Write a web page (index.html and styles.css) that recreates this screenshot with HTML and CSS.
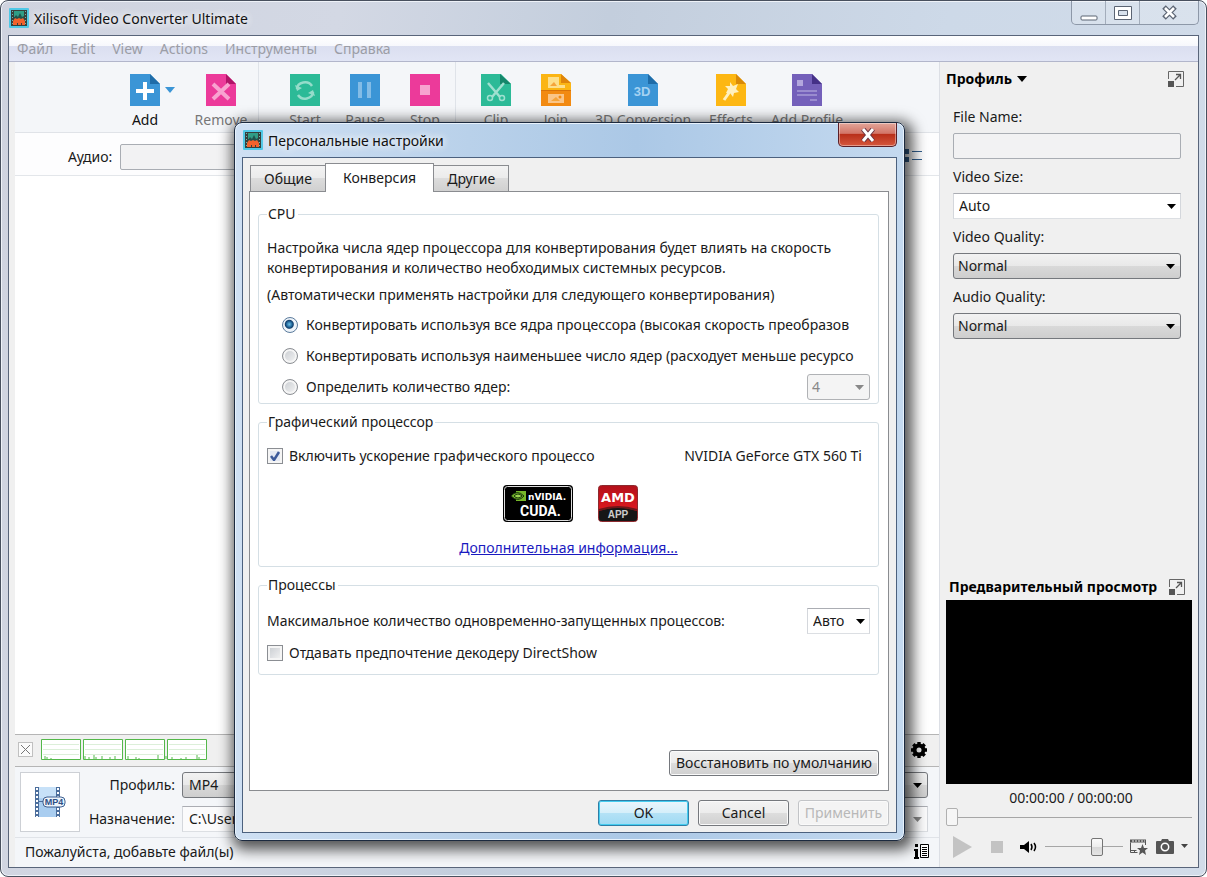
FILE: index.html
```html
<!doctype html>
<html lang="ru">
  <head>
    <meta charset="UTF-8" />
    <meta name="viewport" content="width=device-width, initial-scale=1.0" />
    <title>Xilisoft Video Converter Ultimate</title>
    <link rel="stylesheet" href="styles.css">
  </head>
  <body>
    <!-- Общие символы -->
    <svg class="sprite" aria-hidden="true">
      <symbol id="app-icon" viewBox="0 0 20 20">
        <rect width="20" height="20" rx="1" fill="#4fc8e6"/>
        <rect x="2" y="2" width="16" height="16" fill="#37403c"/>
        <path d="M3.500 3v15M16.500 3v15" stroke="#6fb7b0" stroke-dasharray="1 2"/>
        <rect x="5" y="3" width="10" height="6" fill="#2f9d86"/>
        <path d="M5 10l2-3 2 2 2-4 2 4 2-1v3H5z" fill="#20524c"/>
        <path d="M4 17v-4l2-3 2 1 2-1 2 1 2-1 2 3v4h-3v-2h-1v2H9v-2H8v2z" fill="#f2622c"/>
      </symbol>
      <symbol id="expand-icon" viewBox="0 0 16 16">
        <path d="M.5 8V.5h15v15H8" fill="none" stroke="#666"/>
        <path d="M7 9l5-5M8 3.500h4.500V8" fill="none" stroke="#555" stroke-width="1.300"/>
        <rect y="10" width="6" height="6" fill="#555"/>
      </symbol>
    </svg>

    <div class="window">
      <header class="titlebar">
        <svg class="app-icon"><use href="#app-icon"/></svg>
        <h1 class="window-title">Xilisoft Video Converter Ultimate</h1>
        <div class="window-buttons">
          <button class="win-btn" aria-label="Свернуть">
            <svg width="18" height="17" viewBox="0 0 18 17"><rect x="1" y="12" width="16" height="4" rx="1" fill="#fff" stroke="#5b6473"/></svg>
          </button>
          <button class="win-btn" aria-label="Развернуть">
            <svg width="18" height="17" viewBox="0 0 18 17"><path d="M.5 2.500h17v13H.5zM4.500 6.500v5h9v-5z" fill="#fff" fill-rule="evenodd" stroke="#5b6473"/></svg>
          </button>
          <button class="win-btn win-btn-close" aria-label="Закрыть">
            <svg width="17" height="17" viewBox="0 0 17 17"><path d="M3 3l11 11M14 3L3 14" stroke="#5b6473" stroke-width="5"/><path d="M4 4l9 9M13 4l-9 9" stroke="#fff" stroke-width="2.600"/></svg>
          </button>
        </div>
      </header>

      <div class="client">
        <nav class="menu">
          <button>Файл</button>
          <button>Edit</button>
          <button>View</button>
          <button>Actions</button>
          <button>Инструменты</button>
          <button>Справка</button>
        </nav>

        <div class="workspace">
          <main class="main">
            <!-- Панель инструментов -->
            <div class="toolbar">
              <button class="tool tool-add">
                <svg class="tool-icon" viewBox="0 0 30 32"><path d="M0 0h20l10 10v22H0z" fill="#3b95d6"/><path d="M20 0v10h10z" fill="#1f6ca8"/><path d="M15 8v18M6 17h18" stroke="#fff" stroke-width="4"/></svg>
                Add
              </button>
              <button class="tool-arrow" aria-label="Add menu">
                <svg width="10" height="6" viewBox="0 0 10 6"><path d="M0 0h10L5 6z" fill="#3b95d6"/></svg>
              </button>
              <button class="tool tool-remove">
                <svg class="tool-icon" viewBox="0 0 30 32"><path d="M0 0h20l10 10v22H0z" fill="#ec3a9a"/><path d="M20 0v10h10z" fill="#b01468"/><path d="M7 10l16 15M23 10L7 25" stroke="#f8a3d0" stroke-width="4"/></svg>
                Remove
              </button>
              <span class="tool-sep"></span>
              <button class="tool tool-start">
                <svg class="tool-icon" viewBox="0 0 30 32"><path d="M0 0h30v32H0z" fill="#2cba97"/><path d="M7 15a8 7 0 0 1 15-3M23 18a8 7 0 0 1-15 3" fill="none" stroke="#95dcca" stroke-width="2.500"/><path d="M5 11l2 6 5-3zM25 22l-2-6-5 3z" fill="#95dcca"/></svg>
                Start
              </button>
              <button class="tool">
                <svg class="tool-icon" viewBox="0 0 30 32"><path d="M0 0h30v32H0z" fill="#3b95d6"/><path d="M8 8h4v16H8zM17 8h4v16h-4z" fill="#83bce6"/></svg>
                Pause
              </button>
              <button class="tool">
                <svg class="tool-icon" viewBox="0 0 30 32"><path d="M0 0h30v32H0z" fill="#ec3a9a"/><path d="M10 11h10v10H10z" fill="#f7a3cf"/></svg>
                Stop
              </button>
              <span class="tool-sep"></span>
              <button class="tool">
                <svg class="tool-icon" viewBox="0 0 30 32"><path d="M0 0h20l10 10v22H0z" fill="#2cba97"/><path d="M19 0v10h11z" fill="#15866b"/><path d="M7 9l12 14M23 9L11 23" stroke="#9fe0d0" stroke-width="2.500"/><circle cx="9" cy="24" r="2.500" fill="none" stroke="#9fe0d0" stroke-width="1.500"/><circle cx="21" cy="24" r="2.500" fill="none" stroke="#9fe0d0" stroke-width="1.500"/></svg>
                Clip
              </button>
              <button class="tool">
                <svg class="tool-icon" viewBox="0 0 30 32"><path d="M0 0h20l10 9v7H0z" fill="#fbb514"/><path d="M20 0v9h10z" fill="#df850b"/><path d="M0 16h30v16H0z" fill="#f28a12"/><path d="M0 16.500h30" stroke="#d9730a"/><path d="M7 3h11v8h6v3H7z" fill="#fddf8b"/><path d="M7 20h16v9H7z" fill="#fac588"/><path d="M9 12l4-4 3 4M10 27l5-4 4 4z" fill="#f5a43b"/><circle cx="19" cy="23" r="1.500" fill="#f28a12"/></svg>
                Join
              </button>
              <button class="tool">
                <svg class="tool-icon" viewBox="0 0 30 32"><path d="M0 0h20l10 10v22H0z" fill="#3b95d6"/><path d="M20 0v10h10z" fill="#1f6ca8"/><text x="14" y="22" class="icon-3d">3D</text></svg>
                3D Conversion
              </button>
              <button class="tool">
                <svg class="tool-icon" viewBox="0 0 30 32"><path d="M0 0h20l10 10v22H0z" fill="#fdb713"/><path d="M20 0v10h10z" fill="#d98a08"/><path d="M15 16L8 26" stroke="#fff0bf" stroke-width="3"/><path d="M14 8l3 4 5-2-2 5 3 3-5 1-1 4-3-4-4 0 2-4-3-3 5 0z" fill="#fff0bf"/></svg>
                Effects
              </button>
              <button class="tool">
                <svg class="tool-icon" viewBox="0 0 30 32"><path d="M0 0h20l10 10v22H0z" fill="#7460ba"/><path d="M20 0v10h10z" fill="#453188"/><path d="M5 6h6v6H5z" fill="#b3a7dd"/><path d="M5 17h20M5 21h20M18 26h7" stroke="#a79ad6" stroke-width="1.500"/></svg>
                Add Profile
              </button>
            </div>

            <div class="filters">
              <label for="audio">Аудио:</label>
              <input id="audio" class="text-input audio-input" type="text" disabled>
              <svg class="list-icon" width="22" height="13" viewBox="0 0 22 13"><path d="M0 0h9v5H0zM0 8h9v5H0z" fill="#33608f"/><path d="M12 2.500h10M12 10.500h10" stroke="#33608f"/></svg>
            </div>

            <section class="file-list"></section>

            <!-- Загрузка процессора -->
            <div class="cpu-row">
              <button class="cpu-close" aria-label="Скрыть">
                <svg width="9" height="9" viewBox="0 0 9 9"><path d="M0 0l9 9M9 0L0 9" stroke="#777"/></svg>
              </button>
              <svg class="cpu-graphs" width="166" height="22" viewBox="0 0 166 22">
                <g fill="#fff" stroke="#54b84a"><path d="M.5.5h39v20H.5zM42.500.5h39v20h-39zM84.500.5h39v20h-39zM126.500.5h39v20h-39z"/></g>
                <path d="M2 5.500h36m6 0h36m6 0h36m6 0h36M2 10.500h36m6 0h36m6 0h36m6 0h36M2 15.500h36m6 0h36m6 0h36m6 0h36" stroke="#dcefd9"/>
                <path d="M4 20v-3m2 3v-2m4 2v-1m34 1v-3m4 3v-2m5 2v-4m2 4v-2m6 2v-3m8 3v-2m5 2v-3m13 3v-3m8 3v-2m3 2v-1m19 1v-4m8 4v-3m6 3v-2m9 2v-1m5 1v-2m11 2v-4m2 4v-2" stroke="#54b84a"/>
              </svg>
              <button class="icon-btn gear" aria-label="Настройки">
                <svg width="16" height="16" viewBox="0 0 16 16"><circle cx="8" cy="8" r="4.500" fill="none" stroke="#000" stroke-width="4"/><path d="M8 0v3M8 13v3M0 8h3M13 8h3M2.300 2.300l2 2M11.700 11.700l2 2M13.700 2.300l-2 2M4.300 11.700l-2 2" stroke="#000" stroke-width="3.400"/></svg>
              </button>
            </div>

            <div class="output">
              <div class="format-tile">
                <svg width="32" height="32" viewBox="0 0 32 32">
                  <path d="M1 1h25v30H1z" fill="#4c6e9c"/><path d="M5 1h17v30H5z" fill="#a9cdf0"/><path d="M5 1h17v13L5 12z" fill="#c7e1f8"/>
                  <path d="M3 2v29M24 2v29" stroke="#fff" stroke-width="2" stroke-dasharray="2 2"/><path d="M5 15.500h4" stroke="#4c6e9c"/>
                  <rect x="9" y="11" width="22" height="10" rx="4" fill="#eef5fc" stroke="#3d5f90"/>
                  <text x="20" y="19" class="icon-mp4">MP4</text>
                </svg>
              </div>
              <div class="output-fields">
                <label for="profile">Профиль:</label>
                <select id="profile" class="combo"><option>MP4</option></select>
                <label for="dest">Назначение:</label>
                <select id="dest" class="combo combo-flat combo-gray"><option>C:\Users</option></select>
              </div>
            </div>

            <footer class="status">
              <span>Пожалуйста, добавьте файл(ы)</span>
              <button class="icon-btn" aria-label="Журнал">
                <svg width="16" height="15" viewBox="0 0 16 15"><path d="M1 0h3v3H1zM0 5h4v8h1v2H0v-2h1V7H0z"/><path d="M6.500.5h8v13h-8z" fill="#fff" stroke="#000"/><path d="M8 3.500h5M8 5.500h5M8 7.500h5M8 9.500h5M8 11.500h5" stroke="#000"/></svg>
              </button>
            </footer>
          </main>

          <!-- Правая панель -->
          <aside class="sidebar">
            <div class="side-head">
              <button class="side-title">Профиль
                <svg width="10" height="6" viewBox="0 0 10 6"><path d="M0 0h10L5 6z"/></svg>
              </button>
              <button class="icon-btn" aria-label="Развернуть профиль"><svg width="16" height="16"><use href="#expand-icon"/></svg></button>
            </div>
            <div class="side-fields">
              <label for="file-name">File Name:</label>
              <input id="file-name" class="text-input" type="text" disabled>
              <label for="video-size">Video Size:</label>
              <select id="video-size" class="combo combo-flat"><option>Auto</option></select>
              <label for="video-quality">Video Quality:</label>
              <select id="video-quality" class="combo"><option>Normal</option></select>
              <label for="audio-quality">Audio Quality:</label>
              <select id="audio-quality" class="combo"><option>Normal</option></select>
            </div>

            <section class="preview">
              <div class="preview-head">
                <h2>Предварительный просмотр</h2>
                <button class="icon-btn" aria-label="Развернуть просмотр"><svg width="16" height="16"><use href="#expand-icon"/></svg></button>
              </div>
              <div class="video"></div>
              <div class="time">00:00:00 / 00:00:00</div>
              <input class="slider seek" type="range" value="0" aria-label="Позиция">
              <div class="player">
                <button class="icon-btn play" aria-label="Воспроизвести"><svg width="19" height="22" viewBox="0 0 19 22"><path d="M0 0l19 11L0 22z" fill="#c3c3c3"/></svg></button>
                <button class="icon-btn stop" aria-label="Стоп"><svg width="12" height="12"><path d="M0 0h12v12H0z" fill="#c3c3c3"/></svg></button>
                <button class="icon-btn" aria-label="Звук"><svg width="18" height="14" viewBox="0 0 18 14"><path d="M0 5h4l5-4v12l-5-4H0z"/><path d="M11 4q2 3 0 6M14 3q3 4 0 8" fill="none" stroke="#000" stroke-width="1.500"/></svg></button>
                <input class="slider volume" type="range" value="69" aria-label="Громкость">
                <button class="icon-btn" aria-label="Эффекты"><svg width="18" height="16" viewBox="0 0 18 16"><path d="M.5 3.500v10h7M.5 11.500h6M4.500 11v2M15.500 3v3" fill="none" stroke="#555"/><path d="M0 2h16" stroke="#555" stroke-width="3"/><path d="M2 2h13" stroke="#f0f0f0" stroke-dasharray="2 1"/><path d="M12.500 5l1.500 4h4l-3 2.500 1 4.500-3.500-2.500L9 16l1-4.500L7 9h4z" fill="#555"/></svg></button>
                <button class="icon-btn" aria-label="Снимок"><svg width="18" height="15" viewBox="0 0 18 15"><path d="M1 2h4l1-2h6l1 2h4q1 0 1 1v11q0 1-1 1H1q-1 0-1-1V3q0-1 1-1z" fill="#555"/><circle cx="9" cy="8" r="3.700" fill="#555" stroke="#fff" stroke-width="1.500"/></svg></button>
                <button class="icon-btn" aria-label="Меню снимка"><svg width="7" height="5" viewBox="0 0 7 5"><path d="M0 0h7L3.500 4z" fill="#444"/></svg></button>
              </div>
            </section>
          </aside>
        </div>
      </div>
    </div>

    <!-- Окно настроек -->
    <div class="dialog" role="dialog" aria-labelledby="dialog-title">
      <header class="dialog-titlebar">
        <svg class="app-icon"><use href="#app-icon"/></svg>
        <h2 id="dialog-title" class="window-title">Персональные настройки</h2>
        <button class="dialog-close" aria-label="Закрыть">
          <svg width="16" height="14" viewBox="0 0 16 14"><path d="M3 1l10 12M13 1L3 13" stroke="#6b3340" stroke-width="5"/><path d="M3 1l10 12M13 1L3 13" stroke="#fff" stroke-width="3"/></svg>
        </button>
      </header>
      <div class="dialog-client">
        <div class="tabs" role="tablist">
          <button class="tab" role="tab">Общие</button>
          <button class="tab tab-active" role="tab" aria-selected="true">Конверсия</button>
          <button class="tab" role="tab">Другие</button>
        </div>
        <div class="tab-page">
          <fieldset class="group group-cpu">
            <legend>CPU</legend>
            <p>Настройка числа ядер процессора для конвертирования будет влиять на скорость конвертирования и количество необходимых системных ресурсов.</p>
            <p>(Автоматически применять настройки для следующего конвертирования)</p>
            <div class="radios">
              <label class="option"><input type="radio" name="cores" checked><span>Конвертировать используя все ядра процессора (высокая скорость преобразов</span></label>
              <label class="option"><input type="radio" name="cores"><span>Конвертировать используя наименьшее число ядер (расходует меньше ресурсо</span></label>
              <div class="option-row">
                <label class="option"><input type="radio" name="cores"><span>Определить количество ядер:</span></label>
                <select class="combo combo-small" aria-label="Количество ядер" disabled><option>4</option></select>
              </div>
            </div>
          </fieldset>

          <fieldset class="group group-gpu">
            <legend>Графический процессор</legend>
            <div class="option-row">
              <label class="option"><input type="checkbox" checked><span>Включить ускорение графического процессо</span></label>
              <span class="gpu-name">NVIDIA GeForce GTX 560 Ti</span>
            </div>
            <div class="logos">
              <svg width="70" height="37" viewBox="0 0 70 37">
                <rect width="70" height="37" rx="4" fill="#000"/>
                <rect x="1.500" y="1.500" width="67" height="34" rx="3" fill="none" stroke="#ddd"/>
                <path d="M13 6h10v10H13z" fill="#76b82a"/>
                <path d="M8 11q6-7 13 0q-6 7-13 0z" fill="#76b82a" stroke="#16330a"/>
                <path d="M11 11q4-4 8 0q-4 4-8 0z" fill="#9bd14f" stroke="#16330a"/>
                <text x="25" y="15" class="logo-nvidia">nVIDIA.</text>
                <text x="17" y="31" class="logo-cuda">CUDA.</text>
              </svg>
              <svg width="40" height="37" viewBox="0 0 40 37">
                <defs><linearGradient id="amd-red" x2="0" y2="1"><stop stop-color="#b3101a"/><stop offset="1" stop-color="#f01c22"/></linearGradient></defs>
                <rect x=".5" y=".5" width="39" height="36" rx="3" fill="url(#amd-red)" stroke="#8d2a2e"/>
                <path d="M1 26q19-7 38 0v8q0 2-2 2H3q-2 0-2-2z" fill="#161616"/>
                <path d="M1 25q19-6 38 0" fill="none" stroke="#6d1518" stroke-width="2"/>
                <text x="20" y="17" class="logo-amd">AMD</text>
                <text x="20" y="33" class="logo-app">APP</text>
              </svg>
            </div>
            <a class="more" href="#">Дополнительная информация...</a>
          </fieldset>

          <fieldset class="group group-proc">
            <legend>Процессы</legend>
            <div class="option-row">
              <label for="max-proc">Максимальное количество одновременно-запущенных процессов:</label>
              <select id="max-proc" class="combo combo-flat combo-small"><option>Авто</option></select>
            </div>
            <label class="option"><input type="checkbox"><span>Отдавать предпочтение декодеру DirectShow</span></label>
          </fieldset>

          <button class="btn btn-defaults">Восстановить по умолчанию</button>
        </div>
        <div class="dialog-actions">
          <button class="btn btn-primary">OK</button>
          <button class="btn">Cancel</button>
          <button class="btn" disabled>Применить</button>
        </div>
      </div>
    </div>
  </body>
</html>
```
FILE: styles.css
```css
/* Сброс стилей */
* {
  margin: 0;
  padding: 0;
  box-sizing: border-box;
}

body {
  position: relative;
  font-family: "Noto Sans", "Open Sans", sans-serif;
  font-size: 14px;
  line-height: 20px;
  color: #1a1a1a;
  background: #fff;
}

button,
input,
select {
  font: inherit;
  color: inherit;
}

button {
  border: 0;
  background: none;
}

svg {
  display: block;
  flex: none;
}

.sprite {
  position: absolute;
  width: 0;
  height: 0;
}

/* Главное окно */
.window {
  display: flex;
  flex-direction: column;
  min-height: 100vh;
  padding: 0 7px 8px;
  border: 1px solid #48505e;
  border-radius: 8px;
  background: linear-gradient(100deg, #cfd3df 0%, #d3d8e4 25%, #c3cedd 45%, #cdd9e8 70%, #d2dce9 100%);
  box-shadow: inset 0 0 0 1px #eef2f8;
}

.titlebar {
  display: flex;
  align-items: flex-start;
  height: 34px;
}

.app-icon {
  width: 20px;
  height: 20px;
  margin: 7px 5px 0 1px;
}

.window-title {
  padding-top: 8px;
  font-size: 14px;
  font-weight: 400;
  color: #111;
  text-shadow: 0 0 8px #fff, 0 0 8px #fff;
}

.window-buttons {
  display: flex;
  margin-left: auto;
  height: 24px;
  border: 1px solid #8d98a8;
  border-top: 0;
  border-radius: 0 0 5px 5px;
  background: rgba(255, 255, 255, 0.2);
}

.win-btn {
  display: flex;
  align-items: center;
  justify-content: center;
  width: 34px;
  border-right: 1px solid #a3adbb;
}

.win-btn-close {
  width: 58px;
  border-right: 0;
}

.client {
  flex: 1;
  display: flex;
  flex-direction: column;
  border: 1px solid #59657a;
  background: #f0f0f0;
}

/* Меню */
.menu {
  display: flex;
  gap: 17px;
  height: 26px;
  padding: 0 8px;
  border-bottom: 1px solid #b2b6cb;
  background: linear-gradient(#fff 0%, #f7f8fc 38%, #dbdff0 40%, #e1e5f5 100%);
}

.menu button {
  color: #9b9da6;
}

.workspace {
  flex: 1;
  display: flex;
}

.main {
  flex: 1;
  min-width: 0;
  display: flex;
  flex-direction: column;
  margin-left: 6px;
  border-right: 1px solid #dcdfe5;
  background: #f4f6f9;
}

/* Панель инструментов */
.toolbar {
  display: flex;
  align-items: flex-start;
  height: 71px;
  padding: 12px 0 0 110px;
  border-bottom: 1px solid #e0e3e8;
}

.tool {
  display: flex;
  flex-direction: column;
  align-items: center;
  gap: 4px;
  min-width: 60px;
  padding: 0 9px;
  color: #777;
  white-space: nowrap;
}

.tool-add {
  min-width: 40px;
  padding: 0 5px;
  color: #111;
}

.tool-icon {
  width: 30px;
  height: 32px;
}

.tool-arrow {
  height: 32px;
  width: 12px;
}

.tool-remove {
  min-width: 74px;
  margin-left: 7px;
}

.tool-sep {
  height: 70px;
  margin: -12px 10px 0 0;
  border-left: 1px solid #dfe3e9;
}

.tool-start {
  margin-left: 6px;
}

.icon-3d {
  font-family: "Liberation Sans", sans-serif;
  font-size: 13px;
  font-weight: 700;
  text-anchor: middle;
  fill: #a5d2f2;
}

.filters {
  display: flex;
  align-items: center;
  gap: 8px;
  height: 43px;
  padding: 6px 17px 0 53px;
  border-bottom: 1px solid #e3e6ea;
  background: #fdfdfe;
}

.audio-input {
  flex: 1;
  margin-right: 80px;
}

.text-input {
  height: 26px;
  min-width: 0;
  padding: 0 6px;
  border: 1px solid #a9adb3;
  border-radius: 2px;
  background: #f2f2f3;
}

.list-icon {
  margin-bottom: 4px;
}

.file-list {
  flex: 1;
  background: #fff;
}

/* Загрузка процессора */
.cpu-row {
  display: flex;
  align-items: center;
  height: 33px;
  padding: 0 12px 2px 3px;
  border-top: 1px solid #b5b5b5;
  border-bottom: 1px solid #b5b5b5;
  background: #f0f0f0;
}

.cpu-close {
  display: flex;
  align-items: center;
  justify-content: center;
  width: 15px;
  height: 15px;
  margin-right: 8px;
  border: 1px solid #c0c0c0;
  background: #fbfbfb;
}

.gear {
  margin-left: auto;
}

.output {
  display: flex;
  gap: 6px;
  padding: 5px 11px 5px 5px;
  border-bottom: 1px solid #e0e3e8;
}

.format-tile {
  display: flex;
  align-items: center;
  justify-content: center;
  width: 60px;
  height: 60px;
  border: 1px solid #cdd0d5;
  background: #fff;
}

.icon-mp4 {
  font-family: "Liberation Sans", sans-serif;
  font-size: 9px;
  font-weight: 700;
  text-anchor: middle;
  fill: #2d4f84;
}

.output-fields {
  flex: 1;
  display: grid;
  grid-template-columns: 89px 1fr;
  align-items: center;
  gap: 8px 7px;
}

.output-fields label {
  text-align: right;
}

.status {
  display: flex;
  align-items: center;
  justify-content: space-between;
  height: 29px;
  padding: 0 9px 2px 10px;
}

/* Выпадающие списки */
.combo {
  appearance: none;
  width: 100%;
  height: 26px;
  padding: 0 20px 0 4px;
  border: 1px solid #75787d;
  border-radius: 3px;
  background:
    url("data:image/svg+xml,%3Csvg xmlns='http://www.w3.org/2000/svg' width='9' height='5'%3E%3Cpath d='M0 0h9L4.500 5z'/%3E%3C/svg%3E") right 5px center no-repeat,
    linear-gradient(#f2f2f2 0%, #e9e9e9 48%, #d9d9d9 50%, #cecece 100%);
}

.combo-flat {
  border-color: #abadb3 #d4d7dc #dcdfe3;
  border-radius: 0;
  padding-left: 5px;
  background:
    url("data:image/svg+xml,%3Csvg xmlns='http://www.w3.org/2000/svg' width='9' height='5'%3E%3Cpath d='M0 0h9L4.500 5z'/%3E%3C/svg%3E") right 4px center no-repeat,
    #fff;
}

.output-fields .combo {
  padding-left: 6px;
}

.combo-gray,
.combo:disabled {
  background:
    url("data:image/svg+xml,%3Csvg xmlns='http://www.w3.org/2000/svg' width='9' height='5'%3E%3Cpath fill='%23888' d='M0 0h9L4.500 5z'/%3E%3C/svg%3E") right 5px center no-repeat,
    #fbfbfc;
}

.combo:disabled {
  border-color: #b0b2b5;
  background-color: #f4f4f4;
  color: #888;
  opacity: 1;
}

.combo-small {
  width: 63px;
}

/* Правая панель */
.sidebar {
  display: flex;
  flex-direction: column;
  width: 258px;
  padding: 0 6px;
}

.side-head {
  display: flex;
  align-items: center;
  justify-content: space-between;
  height: 33px;
  padding-right: 8px;
}

.side-title {
  display: flex;
  align-items: center;
  gap: 5px;
  font-weight: 700;
  color: #000;
}

.side-fields {
  display: flex;
  flex-direction: column;
  padding: 12px 11px 0 7px;
}

.side-fields label {
  margin-bottom: 6px;
}

.side-fields .combo,
.side-fields .text-input {
  margin-bottom: 8px;
}

.preview {
  margin-top: auto;
}

.preview-head {
  display: flex;
  align-items: center;
  justify-content: space-between;
  height: 26px;
  padding: 0 7px 0 3px;
}

.preview-head h2 {
  font-size: 14px;
  font-weight: 700;
  color: #000;
  white-space: nowrap;
}

.video {
  height: 184px;
  background: #000;
}

.time {
  padding: 4px 0 0 4px;
  text-align: center;
}

/* Ползунки */
.slider {
  appearance: none;
  display: block;
  width: 100%;
  height: 18px;
  background: linear-gradient(#a6a6a6, #a6a6a6) center / 100% 1px no-repeat;
}

.slider::-webkit-slider-thumb {
  appearance: none;
  width: 12px;
  height: 18px;
  border: 1px solid #757575;
  border-radius: 2px;
  background: linear-gradient(#fafafa 0%, #ededed 50%, #d8d8d8 52%, #e4e4e4 100%);
}

.seek::-webkit-slider-thumb {
  border-color: #b0b0b0;
  background: #f6f6f6;
}

.volume {
  width: 78px;
}

.player {
  display: flex;
  align-items: center;
  justify-content: space-between;
  height: 41px;
  padding: 0 4px 0 7px;
}

.play {
  margin-right: 12px;
}

.stop {
  margin-right: 9px;
}

/* Окно настроек */
.dialog {
  position: absolute;
  top: 122px;
  left: 234px;
  display: flex;
  flex-direction: column;
  width: 671px;
  min-height: 719px;
  padding: 0 7px 7px;
  border: 1px solid #1c2a3f;
  border-radius: 8px;
  background: linear-gradient(90deg, #cfe0f3 0%, #b9d1ea 35%, #abc8e6 60%, #c4d9ef 100%);
  box-shadow: inset 0 0 0 1px #e8f2fc, 3px 4px 14px 5px rgba(0, 0, 0, 0.65);
}

.dialog-titlebar {
  display: flex;
  align-items: flex-start;
  height: 34px;
}

.dialog-close {
  display: flex;
  align-items: center;
  justify-content: center;
  width: 59px;
  height: 24px;
  margin-left: auto;
  border: 1px solid #5a1f27;
  border-top: 0;
  border-radius: 0 0 5px 5px;
  background: linear-gradient(#e3a69a 0%, #d27567 45%, #b9301a 50%, #d5573d 100%);
  box-shadow: inset 0 0 0 1px rgba(255, 255, 255, 0.4);
}

.dialog-client {
  flex: 1;
  display: flex;
  flex-direction: column;
  padding: 5px 7px 6px 6px;
  border: 1px solid #4c617e;
  background: #f0f0f0;
}

.tabs {
  display: flex;
  align-items: flex-end;
  padding-left: 1px;
}

.tab {
  height: 26px;
  padding: 0 13px;
  border: 1px solid #8a8c90;
  border-bottom: 0;
  background: linear-gradient(#f3f3f3 0%, #ebebeb 48%, #dcdcdc 50%, #d0d0d0 100%);
}

.tab-active {
  height: 29px;
  margin: 0 -1px -1px;
  padding: 0 17px;
  z-index: 1;
  background: #fff;
}

.tab-page {
  flex: 1;
  display: flex;
  flex-direction: column;
  gap: 8px;
  padding: 12px 9px 14px 8px;
  border: 1px solid #8a8c90;
  background: #fff;
}

.group {
  min-width: 0;
  padding: 0 8px;
  border: 1px solid #d5dfe5;
  border-radius: 3px;
}

.group legend {
  padding: 0 2px 0 1px;
}

.group-cpu {
  padding-top: 14px;
  padding-bottom: 3px;
}

.group p {
  margin-bottom: 7px;
}

.radios {
  display: flex;
  flex-direction: column;
  gap: 5px;
  padding-left: 15px;
}

.option {
  display: flex;
  align-items: center;
  gap: 6px;
  min-height: 26px;
  overflow: hidden;
  white-space: nowrap;
}

.option-row {
  display: flex;
  align-items: center;
  justify-content: space-between;
}

.option input {
  appearance: none;
  flex: none;
  width: 16px;
  height: 16px;
  border: 1px solid #8b8e93;
  background: linear-gradient(135deg, #c6cacf, #f6f6f6);
  box-shadow: inset 0 0 0 2px #f5f5f5;
}

.option input[type="radio"] {
  margin-right: 2px;
  border-radius: 50%;
}

.option input[type="radio"]:checked {
  border-color: #5b7b9c;
  background: radial-gradient(circle at 45% 45%, #6fc4ea 0, #1d5f93 3px, #123f6b 4px, #eef4fa 5px);
  box-shadow: none;
}

.option input[type="checkbox"]:checked {
  background:
    url("data:image/svg+xml,%3Csvg xmlns='http://www.w3.org/2000/svg' width='12' height='12'%3E%3Cpath d='M2 6l3 4 5-8' fill='none' stroke='%233c5a9a' stroke-width='2.500'/%3E%3C/svg%3E") center no-repeat,
    #e4e9f3;
}

.group-gpu {
  padding-top: 11px;
  padding-bottom: 8px;
}

.gpu-name {
  padding-right: 8px;
}

.logos {
  display: flex;
  justify-content: center;
  gap: 25px;
  padding: 16px 0;
  margin-left: 4px;
}

.logo-nvidia {
  font-family: "DejaVu Sans", sans-serif;
  font-size: 9px;
  font-weight: 700;
  fill: #fff;
}

.logo-cuda {
  font-family: "Roboto", sans-serif;
  font-size: 14px;
  font-weight: 700;
  fill: #fff;
}

.logo-amd {
  font-family: "DejaVu Sans", sans-serif;
  font-size: 13px;
  font-weight: 700;
  text-anchor: middle;
  fill: #fff;
}

.logo-app {
  font-family: "Liberation Sans", sans-serif;
  font-size: 10px;
  font-weight: 700;
  text-anchor: middle;
  fill: #ccc;
}

.more {
  align-self: center;
  display: block;
  width: fit-content;
  margin: 0 auto;
  color: #1a1ac0;
}

.group-proc {
  padding-top: 13px;
  padding-bottom: 8px;
}

.group-proc .option {
  margin-top: 6px;
}

/* Кнопки */
.btn {
  width: 91px;
  height: 26px;
  border: 1px solid #75787d;
  border-radius: 3px;
  background: linear-gradient(#f3f3f3 0%, #ececec 48%, #dddddd 50%, #d0d0d0 100%);
  box-shadow: inset 0 0 0 1px #fafafa;
}

.btn-defaults {
  width: 210px;
  margin-top: auto;
  align-self: flex-end;
  white-space: nowrap;
}

.btn-primary {
  border-color: #2f7ea6;
  background: linear-gradient(#eaf6fc 0%, #d5effa 48%, #b4e2f6 50%, #9fdaf3 100%);
  box-shadow: inset 0 0 0 1px #45cdf0;
}

.btn:disabled {
  border-color: #c2c4c7;
  background: #f4f4f4;
  color: #b8b8b8;
}

.dialog-actions {
  display: flex;
  justify-content: flex-end;
  gap: 9px;
  padding-top: 9px;
}
```
